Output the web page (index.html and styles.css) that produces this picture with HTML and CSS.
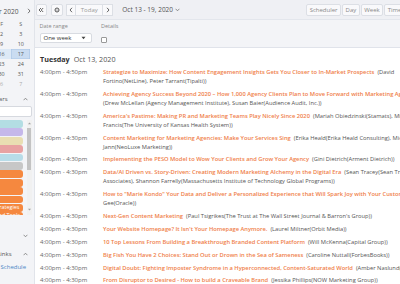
FILE: index.html
```html
<!DOCTYPE html>
<html lang="en">
<head>
  <meta charset="UTF-8" />
  <meta name="viewport" content="width=device-width, initial-scale=1.0" />
  <title>Agenda</title>
  <link rel="stylesheet" href="styles.css">
</head>
<body>
  <div class="app">
    <aside class="side">
      <div class="side-inner">
        <div class="mini-head">
          <span class="mini-title">October 2020</span>
          <svg class="mini-next" width="4" height="6" viewBox="0 0 4 6"><path d="M1 0.8 L3 3 L1 5.2" fill="none" stroke="#666" stroke-width="0.9"/></svg>
        </div>
        <div class="mini-grid">
          <span class="dow">S</span><span class="dow">M</span><span class="dow">T</span><span class="dow">W</span><span class="dow">T</span><span class="dow">F</span><span class="dow">S</span>
          <span class="off">27</span><span class="off">28</span><span class="off">29</span><span class="off">30</span><span>1</span><span>2</span><span>3</span>
          <span>4</span><span>5</span><span>6</span><span>7</span><span>8</span><span>9</span><span>10</span>
          <span class="wk">11</span><span class="wk">12</span><span class="wk">13</span><span class="wk">14</span><span class="wk">15</span><span class="wk">16</span><span class="wk sel">17</span>
          <span>18</span><span>19</span><span>20</span><span>21</span><span>22</span><span>23</span><span>24</span>
          <span>25</span><span>26</span><span>27</span><span>28</span><span>29</span><span>30</span><span>31</span>
          <span class="off">1</span><span class="off">2</span><span class="off">3</span><span class="off">4</span><span class="off">5</span><span class="off">6</span><span class="off">7</span>
        </div>

        <div class="sec-head sec-cal">
          <span class="sec-title">Calendars</span>
          <svg class="caret" width="5" height="4" viewBox="0 0 5 4"><path d="M0.6 3.2 L2.5 1.2 L4.4 3.2" fill="none" stroke="#777" stroke-width="0.8"/></svg>
        </div>
        <input class="cal-search" type="text">
        <div class="cal-list">
          <div class="cal-items">
            <div class="cal-item c-teal">All Sessions</div>
            <div class="cal-item c-lav">Workshops</div>
            <div class="cal-item c-beige">Content Lab NEXT</div>
            <div class="cal-item c-pink">Keynote</div>
            <div class="cal-item c-blue">Meetups</div>
            <div class="cal-item c-grey">Breaks</div>
            <div class="cal-item c-orange">Content Strategies</div>
            <div class="cal-item c-orange">Analytics &amp; Data</div>
            <div class="cal-item c-orange">Agency Strategies</div>
            <div class="cal-item c-orange">Industry Breakout</div>
            <div class="cal-item c-orange">Content Creation &amp; Promotion Strategies</div>
            <div class="cal-item c-orange">Content Distribution Strategies and Tools</div>
          </div>
          <div class="scroll">
            <svg width="5" height="5" viewBox="0 0 5 5"><path d="M1 3.3 L2.5 1.6 L4 3.3 Z" fill="#a3a3a3"/></svg>
            <div class="thumb"></div>
            <svg width="5" height="5" viewBox="0 0 5 5"><path d="M1 1.7 L2.5 3.4 L4 1.7 Z" fill="#a3a3a3"/></svg>
          </div>
        </div>

        <div class="sec-head sec-tags">
          <span class="sec-title">Tags</span>
          <svg class="caret" width="5" height="4" viewBox="0 0 5 4"><path d="M0.6 0.8 L2.5 2.8 L4.4 0.8" fill="none" stroke="#777" stroke-width="0.8"/></svg>
        </div>
        <div class="sec-head sec-links">
          <span class="sec-title">Links</span>
          <svg class="caret" width="5" height="4" viewBox="0 0 5 4"><path d="M0.6 3.2 L2.5 1.2 L4.4 3.2" fill="none" stroke="#777" stroke-width="0.8"/></svg>
        </div>
        <a class="side-link" href="#">Schedule</a>
      </div>
    </aside>

    <main class="main">
      <div class="toolbar">
        <button class="btn icon-btn">
          <svg width="6" height="6" viewBox="0 0 6 6"><path d="M3 1 L1 3 L3 5 M5.2 1 L3.2 3 L5.2 5" fill="none" stroke="#555" stroke-width="0.9"/></svg>
        </button>
        <button class="btn icon-btn wide">
          <svg width="6" height="6" viewBox="0 0 6 6"><circle cx="3" cy="3" r="2" fill="none" stroke="#555" stroke-width="1"/><circle cx="3" cy="3" r="0.6" fill="#555"/></svg>
        </button>
        <div class="btn-group">
          <button class="btn arrow">
            <svg width="4" height="6" viewBox="0 0 4 6"><path d="M3 0.8 L1 3 L3 5.2" fill="none" stroke="#555" stroke-width="0.9"/></svg>
          </button>
          <button class="btn today">Today</button>
          <button class="btn arrow">
            <svg width="4" height="6" viewBox="0 0 4 6"><path d="M1 0.8 L3 3 L1 5.2" fill="none" stroke="#555" stroke-width="0.9"/></svg>
          </button>
        </div>
        <div class="range">Oct 13 - 19, 2020
          <svg width="5" height="4" viewBox="0 0 5 4"><path d="M0.6 0.8 L2.5 2.8 L4.4 0.8" fill="none" stroke="#666" stroke-width="0.7"/></svg>
        </div>
        <div class="views">
          <button class="btn">Scheduler</button>
          <button class="btn">Day</button>
          <button class="btn">Week</button>
          <button class="btn">Timeline</button>
        </div>
      </div>

      <div class="filters">
        <div class="field">
          <label>Date range</label>
          <div class="select">One week
            <svg width="5" height="4" viewBox="0 0 5 4"><path d="M0.5 0.8 L4.5 0.8 L2.5 3.2 Z" fill="#444"/></svg>
          </div>
        </div>
        <div class="field">
          <label>Details</label>
          <input class="check" type="checkbox">
        </div>
      </div>

      <div class="agenda">
        <div class="day-head"><span class="day-name">Tuesday</span><span class="day-date">Oct 13, 2020</span></div>

        <div class="ev">
          <div class="ev-time">4:00pm - 4:50pm</div>
          <div class="ev-body"><span class="ev-title">Strategize to Maximize: How Content Engagement Insights Gets You Closer to In-Market Prospects</span>&nbsp; <span class="ev-who">(David Fortino(NetLine), Peter Tarrant(Tipalti))</span></div>
        </div>
        <div class="ev">
          <div class="ev-time">4:00pm - 4:30pm</div>
          <div class="ev-body"><span class="ev-title">Achieving Agency Success Beyond 2020 – How 1,000 Agency Clients Plan to Move Forward with Marketing Agencies</span>&nbsp; <span class="ev-who">(Drew McLellan (Agency Management Institute), Susan Baier(Audience Audit, Inc.))</span></div>
        </div>
        <div class="ev">
          <div class="ev-time">4:00pm - 4:30pm</div>
          <div class="ev-body"><span class="ev-title">America's Pastime: Making PR and Marketing Teams Play Nicely Since 2020</span>&nbsp; <span class="ev-who">(Mariah Obiedzinski(Stamats), Michael Francis(The University of Kansas Health System))</span></div>
        </div>
        <div class="ev">
          <div class="ev-time">4:00pm - 4:30pm</div>
          <div class="ev-body"><span class="ev-title">Content Marketing for Marketing Agencies: Make Your Services Sing</span>&nbsp; <span class="ev-who">(Erika Heald(Erika Heald Consulting), Michelle Jann(NeoLuxe Marketing))</span></div>
        </div>
        <div class="ev">
          <div class="ev-time">4:00pm - 4:30pm</div>
          <div class="ev-body"><span class="ev-title">Implementing the PESO Model to Wow Your Clients and Grow Your Agency</span>&nbsp; <span class="ev-who">(Gini Dietrich(Arment Dietrich))</span></div>
        </div>
        <div class="ev">
          <div class="ev-time">4:00pm - 4:30pm</div>
          <div class="ev-body"><span class="ev-title">Data/AI Driven vs. Story-Driven: Creating Modern Marketing Alchemy in the Digital Era</span>&nbsp; <span class="ev-who">(Sean Tracey(Sean Tracey Associates), Shannon Farrelly(Massachusetts Institute of Technology Global Programs))</span></div>
        </div>
        <div class="ev">
          <div class="ev-time">4:00pm - 4:30pm</div>
          <div class="ev-body"><span class="ev-title">How to "Marie Kondo" Your Data and Deliver a Personalized Experience that Will Spark Joy with Your Customers</span>&nbsp; <span class="ev-who">(Jo Gee(Oracle))</span></div>
        </div>
        <div class="ev">
          <div class="ev-time">4:00pm - 4:30pm</div>
          <div class="ev-body"><span class="ev-title">Next-Gen Content Marketing</span>&nbsp; <span class="ev-who">(Paul Tsigrikes(The Trust at The Wall Street Journal &amp; Barron's Group))</span></div>
        </div>
        <div class="ev">
          <div class="ev-time">4:00pm - 4:30pm</div>
          <div class="ev-body"><span class="ev-title">Your Website Homepage? It Isn't Your Homepage Anymore.</span>&nbsp; <span class="ev-who">(Laurel Miltner(Orbit Media))</span></div>
        </div>
        <div class="ev">
          <div class="ev-time">4:00pm - 4:30pm</div>
          <div class="ev-body"><span class="ev-title">10 Top Lessons From Building a Breakthrough Branded Content Platform</span>&nbsp; <span class="ev-who">(Will McKenna(Capital Group))</span></div>
        </div>
        <div class="ev">
          <div class="ev-time">4:00pm - 4:30pm</div>
          <div class="ev-body"><span class="ev-title">Big Fish You Have 2 Choices: Stand Out or Drown in the Sea of Sameness</span>&nbsp; <span class="ev-who">(Caroline Nuttall(ForbesBooks))</span></div>
        </div>
        <div class="ev">
          <div class="ev-time">4:00pm - 4:30pm</div>
          <div class="ev-body"><span class="ev-title">Digital Doubt: Fighting Imposter Syndrome in a Hyperconnected, Content-Saturated World</span>&nbsp; <span class="ev-who">(Amber Naslund(Aka))</span></div>
        </div>
        <div class="ev">
          <div class="ev-time">4:00pm - 4:30pm</div>
          <div class="ev-body"><span class="ev-title">From Disruptor to Desired - How to build a Craveable Brand</span>&nbsp; <span class="ev-who">(Jessika Phillips(NOW Marketing Group))</span></div>
        </div>
      </div>
    </main>
  </div>
</body>
</html>
```

FILE: styles.css
```css
* {
  box-sizing: border-box;
}
body {
  margin: 0;
  width: 400px;
  height: 284px;
  overflow: hidden;
  font-family: "Open Sans", "Liberation Sans", sans-serif;
  color: #555;
  background: #fff;
}
.app {
  display: flex;
  height: 284px;
}

/* sidebar */
.side {
  flex: 0 0 34px;
  display: flex;
  justify-content: flex-end;
  background: #f3f4f7;
  overflow: hidden;
}
.side-inner {
  flex: 0 0 80px;
  padding: 0 2.5px;
  font-size: 6px;
}
.mini-head {
  height: 19px;
  padding: 3px 1px 0 0;
  display: flex;
  align-items: center;
  justify-content: flex-end;
  gap: 8px;
}
.mini-title {
  font-size: 6.6px;
  color: #555;
}
.mini-grid {
  display: grid;
  grid-template-columns: repeat(7, 1fr);
  grid-auto-rows: 10px;
  margin-right: 1.2px;
  font-size: 5.4px;
  line-height: 10px;
  text-align: center;
  color: #555;
}
.mini-grid .dow {
  color: #666;
}
.mini-grid .off {
  color: #aaa;
}
.mini-grid .wk {
  background: #dde9f6;
}
.mini-grid .sel {
  background: #cadcf1;
  box-shadow: inset 0 0 0 0.6px #a9c5e6;
}
.sec-head {
  display: flex;
  align-items: center;
  justify-content: flex-end;
  gap: 15px;
  height: 15px;
  padding-right: 4px;
  color: #555;
}
.sec-cal {
  margin-top: 2px;
}
.sec-tags {
  margin-top: 13px;
  gap: 40px;
}
.sec-links {
  margin-top: 3.5px;
  gap: 11px;
}
.sec-title {
  font-size: 6px;
}
.cal-search {
  display: block;
  width: 100%;
  height: 11px;
  margin: 0;
  border: 1px solid #d6d9df;
  border-radius: 2px;
  background: #fff;
}
.cal-list {
  display: flex;
  gap: 3.5px;
  height: 95px;
  margin-top: 3px;
  overflow: hidden;
}
.cal-items {
  flex: 1;
  min-width: 0;
}
.cal-item {
  height: 7.9px;
  margin-bottom: 0.5px;
  padding: 0 3px 0 20.5px;
  border-radius: 3px;
  font-size: 5.4px;
  line-height: 7.9px;
  color: #fff;
  white-space: nowrap;
  overflow: hidden;
  text-overflow: ellipsis;
}
.c-teal { background: #b3dde3; }
.c-lav { background: #c5b8ea; }
.c-beige { background: #e9deb2; }
.c-pink { background: #e8a2a2; }
.c-blue { background: #b8dce8; }
.c-grey { background: #c7c7c7; }
.c-orange { background: #f5883f; }
.scroll {
  flex: 0 0 5px;
  display: flex;
  flex-direction: column;
  align-items: center;
  background: #f1f1f1;
  padding: 1px 0 3px;
}
.scroll .thumb {
  width: 4px;
  height: 42px;
  margin: 2px 0 auto;
  background: #c3c3c3;
}
.side-link {
  display: block;
  text-align: right;
  padding-right: 5.5px;
  line-height: 10px;
  font-size: 6px;
  color: #4a86c5;
  text-decoration: none;
}

/* main */
.main {
  flex: 0 0 397px;
  display: flex;
  flex-direction: column;
  border-left: 1px solid #e1e4ea;
}
.toolbar {
  flex: none;
  height: 20px;
  display: flex;
  align-items: center;
  gap: 4px;
  padding: 0 16px 0 1px;
  background: #eff0f4;
  border-bottom: 1px solid #e3e6ec;
}
.btn {
  height: 12px;
  padding: 0 3px;
  display: flex;
  align-items: center;
  justify-content: center;
  background: #f9f9fb;
  border: 1px solid #dcdfe5;
  border-radius: 2px;
  font-family: inherit;
  font-size: 6px;
  color: #888;
}
.icon-btn {
  width: 10.7px;
  padding: 0;
}
.icon-btn.wide {
  width: 12.6px;
}
.btn-group {
  display: flex;
  margin-left: -1px;
}
.btn-group .btn {
  border-radius: 0;
}
.btn-group .btn + .btn {
  border-left: none;
}
.btn-group .arrow {
  width: 10px;
  padding: 0;
}
.btn-group .today {
  width: 27px;
  padding: 0;
  color: #999;
}
.range {
  margin-left: 5px;
  display: flex;
  align-items: center;
  gap: 2px;
  font-size: 6.5px;
  color: #555;
}
.views {
  margin-left: auto;
  display: flex;
  gap: 1px;
}
.views .btn {
  padding: 0 2.5px;
}

.filters {
  flex: none;
  height: 28px;
  display: flex;
  gap: 9px;
  padding: 3px 0 0 4.5px;
  background-color: #f3f4f7;
  background-image: radial-gradient(#e7e9ed 0.5px, transparent 0.7px);
  background-size: 2px 2px;
  border-bottom: 1px solid #e0e3ea;
}
.field {
  display: flex;
  flex-direction: column;
}
.field label {
  height: 7px;
  margin-bottom: 2.5px;
  font-size: 5.5px;
  line-height: 7px;
  color: #888;
}
.select {
  width: 52.5px;
  height: 10px;
  display: flex;
  align-items: center;
  justify-content: space-between;
  padding: 0 5px 0 3px;
  background: #fff;
  border: 1px solid #d8dbe1;
  border-radius: 2px;
  font-size: 6px;
  color: #333;
}
.check {
  appearance: none;
  width: 6px;
  height: 6px;
  margin: 4px 0 0;
  background: #fff;
  border: 1px solid #999;
  border-radius: 1px;
}

.agenda {
  flex: 1;
  min-height: 0;
  overflow: hidden;
  padding: 5px 6px 0 5px;
  background: #fff;
}
.day-head {
  height: 13px;
  display: flex;
  align-items: baseline;
  gap: 4px;
  line-height: 13px;
  font-size: 7.2px;
}
.day-name {
  font-weight: 700;
  color: #333;
}
.day-date {
  color: #555;
}
.ev {
  display: flex;
  padding: 1.95px 0;
  font-size: 6px;
  line-height: 9px;
}
.ev-time {
  flex: 0 0 63px;
  color: #666;
}
.ev-body {
  flex: 1;
  min-width: 0;
  font-size: 5.75px;
}
.ev-title {
  font-weight: 600;
  color: #ef7e49;
}
.ev-who {
  color: #555;
}
```
